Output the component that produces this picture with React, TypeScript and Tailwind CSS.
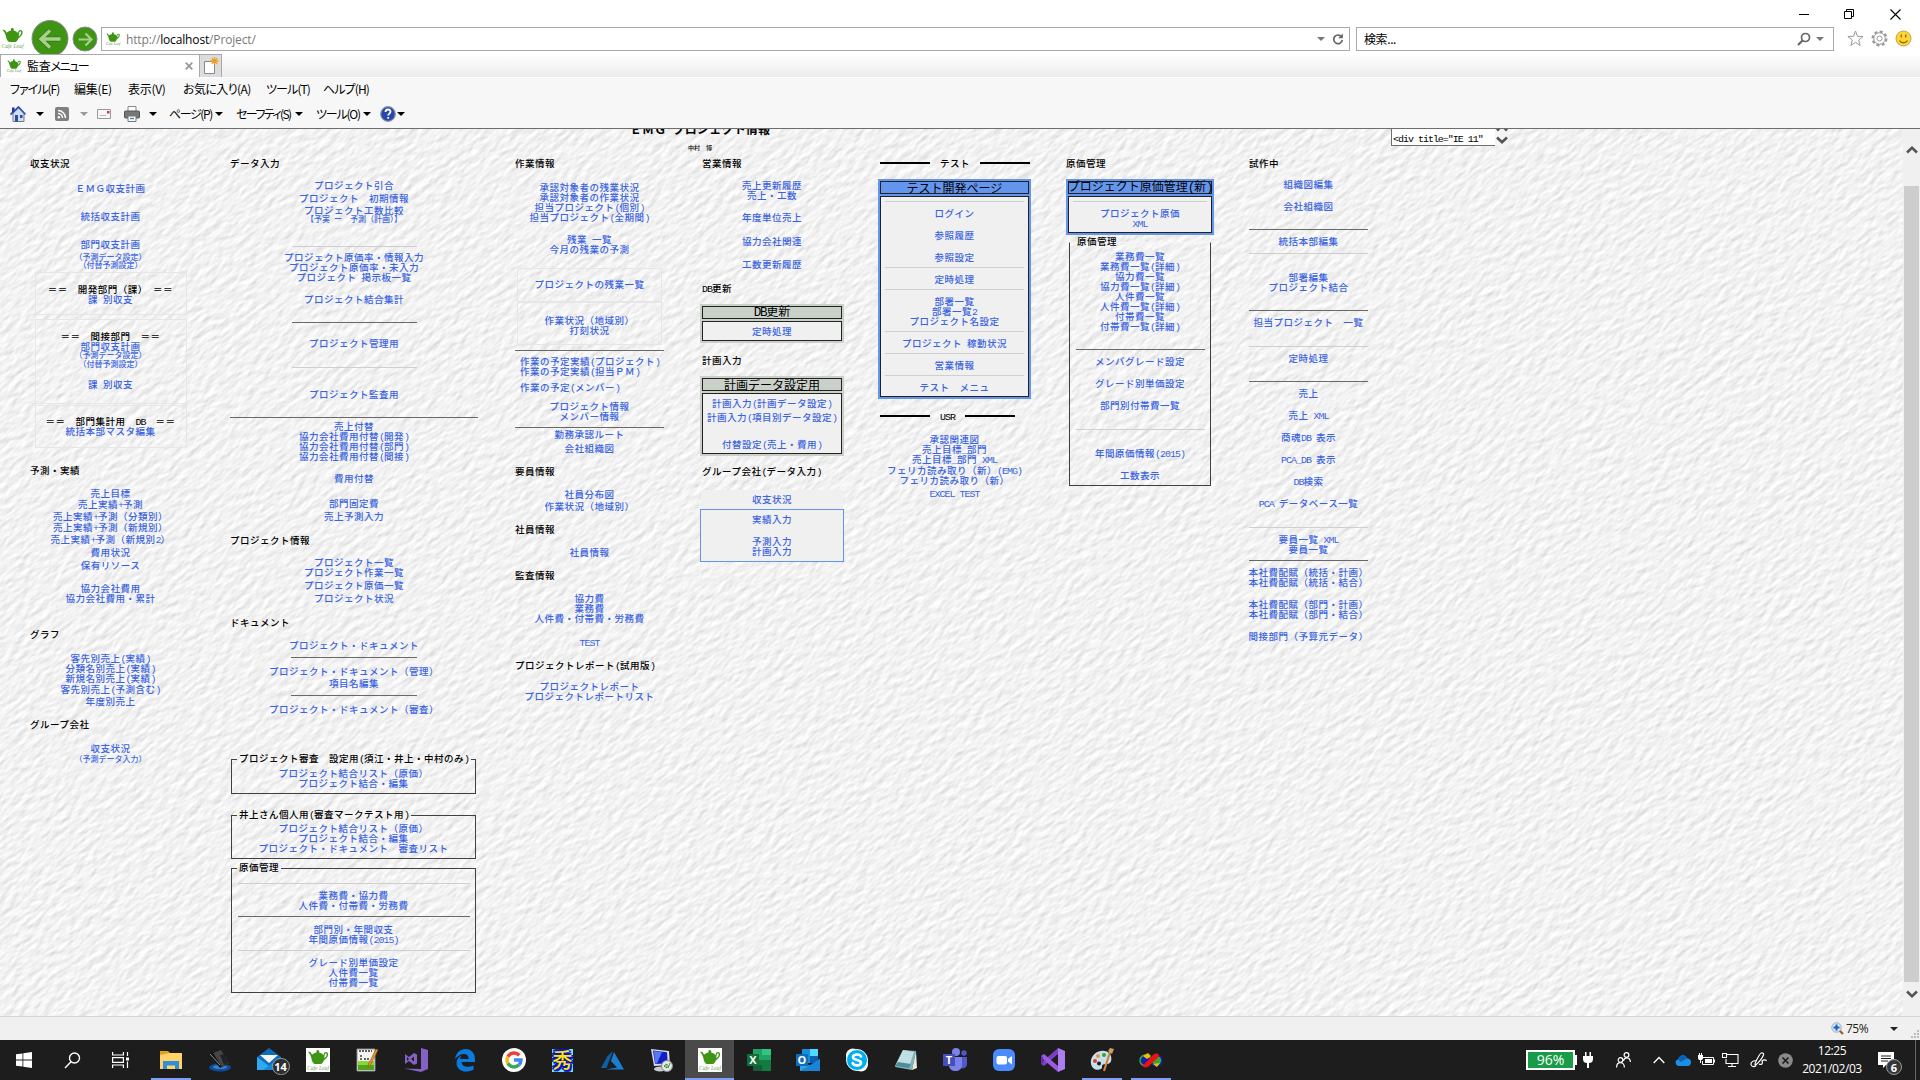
import React from "react";

type Kids = { children?: React.ReactNode };

/* ---------- text helpers ---------- */

function Mixed({ text }: { text: string }) {
  const parts = text.split(/([\x20-\x7e]+)/).filter(Boolean);
  return (
    <>
      {parts.map((p, i) =>
        /^[\x20-\x7e]/.test(p) ? (
          <span key={i} className="font-['Liberation_Mono',monospace] text-[1.05em] leading-none tracking-[-0.1em]">
            {p}
          </span>
        ) : (
          <span key={i}>{p}</span>
        )
      )}
    </>
  );
}

function A({ h = "h-[10px]", t, left }: { h?: string; t: string; left?: boolean }) {
  return (
    <div className={`${h} flex shrink-0 ${left ? "pl-[5px]" : "justify-center"} whitespace-pre text-[9.5px] font-medium leading-[8px] tracking-[0.5px] text-[#3a63e0]`}>
      <a className="shrink-0"><Mixed text={t} /></a>
    </div>
  );
}

function S({ h = "h-[8px]", t }: { h?: string; t: string }) {
  return (
    <div className={`${h} flex shrink-0 justify-center whitespace-pre text-[8px] font-medium leading-[9px] text-[#4169e1]`}>
      <a className="shrink-0"><Mixed text={t} /></a>
    </div>
  );
}

function H({ h, t, center }: { h: string; t: string; center?: boolean }) {
  return (
    <div className={`${h} flex shrink-0 whitespace-pre text-[9.5px] font-medium leading-[8px] tracking-[0.5px] text-black ${center ? "justify-center" : ""}`}>
      <span className="shrink-0"><Mixed text={t} /></span>
    </div>
  );
}

function R({ h, w = "w-full", dark }: { h: string; w?: string; dark?: boolean }) {
  return (
    <div className={`${h} shrink-0 pt-[5px]`}>
      <div className={`mx-auto h-px ${w} ${dark ? "bg-[#696969]" : "bg-[#cfcfcf]"}`} />
    </div>
  );
}

function Faint({ c, children }: Kids & { c: string }) {
  return <div className={`mx-auto w-[152px] shrink-0 border border-[#e6e6e6] ${c}`}>{children}</div>;
}

function Field({ c, legend, children }: Kids & { c: string; legend: string }) {
  return (
    <fieldset className={`box-border shrink-0 border border-[#404040] ${c}`}>
      <legend className="ml-[5px] h-[10px] whitespace-pre px-[2px] text-[9.5px] font-medium leading-[8px] tracking-[0.5px] text-black">
        <Mixed text={legend} />
      </legend>
      {children}
    </fieldset>
  );
}

function Panel({ c, tone, title, children }: Kids & { c: string; tone: string; title: string }) {
  return (
    <div className={`flex shrink-0 flex-col gap-[2px] p-[2px] ${tone} ${c}`}>
      <div className="flex h-[13px] shrink-0 items-center justify-center whitespace-pre border border-[#222] text-[12px] leading-[12px] text-black">
        <span className="shrink-0"><Mixed text={title} /></span>
      </div>
      <div className="flex-1 border border-[#222] bg-[#f0f0f0]">{children}</div>
    </div>
  );
}

/* ---------- icons ---------- */

function Teapot({ c, plate }: { c: string; plate?: boolean }) {
  return (
    <svg viewBox="0 0 24 24" className={c}>
      {plate && <rect width="24" height="24" fill="#fff" />}
      <path d="M2 4c2.200-.6 3.200.6 4 2.800C7.200 5.800 8.600 5 10.600 4.600 10 3.200 10.600 2 11.800 2s1.900 1.200 1.300 2.600c2 .4 3.500 1.300 4.500 2.700 0-2.500 1.500-3.600 3.200-3.100 2.400.8 1.800 5.300-3 8.300-.6 1.800-1.600 2.900-2.700 3.500H8.600C6.500 14.800 5.800 12.600 5.300 10 4.800 7.500 3.800 5.600 2 4z" fill="#3f9413" />
      <path d="M18.300 10.300c2.200-1.700 3-4.500 1.900-4.900-1-.3-1.900 1.200-1.900 4.900z" fill="#fff" />
      <text x="12" y="21.500" textAnchor="middle" fontFamily="Liberation Serif" fontStyle="italic" fontSize="5.600" fill="#6aa35a">Cafe Leaf</text>
    </svg>
  );
}

function Caret({ c = "text-black" }: { c?: string }) {
  return (
    <svg viewBox="0 0 8 4" className={`h-[4px] w-[8px] shrink-0 ${c}`}>
      <path d="M0 0h8L4 4z" fill="currentColor" />
    </svg>
  );
}

function Chevron({ up }: { up?: boolean }) {
  return (
    <svg viewBox="0 0 12 8" className="h-[8px] w-[12px]">
      <path d={up ? "M1 6.500L6 1.800l5 4.700" : "M1 1.500l5 4.700 5-4.700"} fill="none" stroke="#555" strokeWidth="2.600" />
    </svg>
  );
}

/* ---------- browser frame ---------- */

function AddressBar() {
  return (
    <div className="flex h-[54px] shrink-0 overflow-hidden bg-white">
      <div className="w-[26px] pt-[26px]">
        <Teapot c="h-[24px] w-[25px]" />
      </div>
      <div className="ml-[5px] h-[54px] w-[38px] overflow-hidden pt-[20px]">
        <svg viewBox="0 0 38 38" className="h-[38px] w-[38px]">
          <circle cx="19" cy="18.500" r="18" fill="#3f9413" stroke="#8a8a8a" />
          <path d="M29.500 19H11M19 10.500L10 19l9 8.500" fill="none" stroke="#2f7a0c" strokeWidth="5" />
          <path d="M29.500 19H11M19 10.500L10 19l9 8.500" fill="none" stroke="#a6d08c" strokeWidth="3.400" />
        </svg>
      </div>
      <div className="ml-[3px] w-[26px] pt-[26px]">
        <svg viewBox="0 0 26 26" className="h-[26px] w-[26px]">
          <circle cx="13" cy="13" r="12" fill="#3f9413" stroke="#8a8a8a" />
          <path d="M6.500 13.500H19M13.500 7.500l6 6-6 6" fill="none" stroke="#a6d08c" strokeWidth="2.200" />
        </svg>
      </div>
      <div className="ml-[3px] mt-[27px] flex h-[24px] w-[1249px] items-center border border-[#a9a9a9] bg-white pl-[3px] pr-[5px]">
        <Teapot c="h-[16px] w-[16px]" />
        <div className="ml-[5px] flex-1 whitespace-pre pt-[2px] font-['Open_Sans',sans-serif] text-[12px] tracking-[-0.15px] text-[#7a7a7a]">
          http://<span className="text-black">localhost</span>/Project/
        </div>
        <Caret c="text-[#777]" />
        <svg viewBox="0 0 12 12" className="ml-[7px] h-[12px] w-[12px]">
          <path d="M9.800 4.200A4.300 4.300 0 1 0 10.300 7" fill="none" stroke="#666" strokeWidth="1.700" />
          <path d="M10.800.5v4.700H6.200z" fill="#666" />
        </svg>
      </div>
      <div className="ml-[6px] mt-[27px] flex h-[24px] w-[478px] items-center border border-[#a9a9a9] bg-white pl-[7px] pr-[9px]">
        <div className="flex-1 text-[12px] tracking-[-0.4px]">検索...</div>
        <svg viewBox="0 0 14 14" className="h-[14px] w-[14px]">
          <circle cx="8.500" cy="5.500" r="4" fill="none" stroke="#666" strokeWidth="1.700" />
          <path d="M5.500 8.500L1 13" stroke="#666" strokeWidth="2.200" />
        </svg>
        <Caret c="text-[#777] ml-[5px]" />
      </div>
      <div className="flex flex-1 flex-col">
        <div className="-ml-[38px] flex h-[28px] items-center">
          <svg viewBox="0 0 10 10" className="ml-[3px] h-[10px] w-[10px]"><path d="M0 5.500h10" stroke="#000" /></svg>
          <svg viewBox="0 0 10 10" className="ml-[35px] h-[10px] w-[10px]">
            <path d="M.5 2.500h7v7h-7zM2.500 2.500v-2h7v7h-2" fill="none" stroke="#000" />
          </svg>
          <svg viewBox="0 0 11 11" className="ml-[36px] h-[11px] w-[11px]"><path d="M.5.5l10 10M10.500.5l-10 10" stroke="#000" strokeWidth="1.100" /></svg>
        </div>
        <div className="flex h-[20px] items-center gap-[7px] pl-[13px]">
          <svg viewBox="0 0 17 17" className="h-[17px] w-[17px]">
            <path d="M8.500 1l2 5.300 5.600.2-4.400 3.500 1.500 5.500-4.700-3.200-4.700 3.200L5.300 10 .9 6.500l5.600-.2z" fill="#fff" stroke="#999" />
          </svg>
          <svg viewBox="0 0 17 17" className="h-[17px] w-[17px]">
            <circle cx="8.500" cy="8.500" r="6.800" fill="none" stroke="#999" strokeWidth="2.400" strokeDasharray="3 2.340" />
            <circle cx="8.500" cy="8.500" r="5.700" fill="#fff" stroke="#999" />
            <circle cx="8.500" cy="8.500" r="2.500" fill="#fff" stroke="#999" />
          </svg>
          <svg viewBox="0 0 17 17" className="h-[17px] w-[17px]">
            <circle cx="8.500" cy="8.500" r="7.500" fill="#ffd633" stroke="#b9a25a" />
            <path d="M6.300 4.500v3M10.700 4.500v3M4.500 10.500c1.500 3 6.500 3 8 0" fill="none" stroke="#8a6a00" strokeWidth="1.300" />
          </svg>
        </div>
      </div>
    </div>
  );
}

function TabRow() {
  return (
    <div className="flex h-[23px] shrink-0 bg-linear-to-b from-white to-[#ececec]">
      <div className="flex w-[200px] items-center border-x border-t border-[#a9a9a9] bg-white pl-[5px] pr-[6px]">
        <Teapot c="h-[16px] w-[16px]" />
        <div className="ml-[5px] flex-1 text-[12px] tracking-[-1.4px] text-black [font-feature-settings:'palt']"><span className="tracking-[-0.3px]">監査</span>メニュー</div>
        <svg viewBox="0 0 8 8" className="h-[8px] w-[8px]"><path d="M.7.7l6.600 6.600M7.300.7L.7 7.300" stroke="#999" strokeWidth="1.800" /></svg>
      </div>
      <div className="flex w-[22px] items-center justify-center border-r border-t border-[#a9a9a9] bg-[#dcdcdc]">
        <svg viewBox="0 0 16 18" className="h-[18px] w-[16px]">
          <path d="M1.500 4.500h10v12h-10z" fill="#fff" stroke="#888" />
          <path d="M11.500 0v8M7.500 4h8M8.700 1.200l5.600 5.600M14.300 1.200L8.700 6.800" stroke="#f0a020" strokeWidth="1.300" />
        </svg>
      </div>
    </div>
  );
}

const menu: [string, string][] = [
  ["w-[64px] tracking-[-1px]", "ファイル(F)"],
  ["w-[54px] tracking-[-0.3px]", "編集(E)"],
  ["w-[55px] tracking-[-0.3px]", "表示(V)"],
  ["w-[83px] tracking-[-0.6px]", "お気に入り(A)"],
  ["w-[57px] tracking-[-0.9px]", "ツール(T)"],
  ["w-[60px] tracking-[-0.9px]", "ヘルプ(H)"],
];

function MenuBar() {
  return (
    <div className="flex h-[25px] shrink-0 items-center border-t border-white bg-[#f7f7f7] pb-[3px] pl-[10px] text-[12px] text-black [font-feature-settings:'palt']">
      {menu.map(([w, t]) => (
        <div key={t} className={`${w} shrink-0 whitespace-pre`}>{t}</div>
      ))}
    </div>
  );
}

function CommandBar() {
  return (
    <div className="flex h-[27px] shrink-0 items-center border-b border-[#6d6d6d] bg-[#f7f7f7] pb-[3px] pl-[10px] text-[12px] text-black [font-feature-settings:'palt']">
      <svg viewBox="0 0 16 16" className="h-[16px] w-[16px]">
        <path d="M3 7v8.500h11V7L8.500 2z" fill="#d5dcea" stroke="#6d7b98" />
        <path d="M.5 8.500L8.500 1l7 7.500" fill="none" stroke="#3552b5" strokeWidth="1.800" />
        <path d="M2 1.500h2.500V5L2 7z" fill="#24348f" />
        <path d="M5 9h3v6.500H5z" fill="#2450a0" /><path d="M10 9h2.500v3H10z" fill="#2450a0" />
      </svg>
      <div className="flex w-[29px] justify-center pr-[1px]"><Caret /></div>
      <svg viewBox="0 0 14 14" className="h-[14px] w-[14px]">
        <rect width="14" height="14" rx="2" fill="#808080" />
        <path d="M3 6.500A4.500 4.500 0 0 1 7.500 11M3 3.500a7.500 7.500 0 0 1 7.500 7.500" fill="none" stroke="#fff" strokeWidth="1.500" />
        <circle cx="3.900" cy="10.200" r="1.200" fill="#fff" />
      </svg>
      <div className="flex w-[28px] justify-center pl-[2px]"><Caret c="text-[#999]" /></div>
      <svg viewBox="0 0 14 10" className="h-[10px] w-[14px]">
        <path d="M.5.5h13v9H.5z" fill="#f7f7fa" stroke="#999" /><path d="M10 2h2.500v2.500H10z" fill="#d33" /><path d="M3 6.500h6" stroke="#bbb" />
      </svg>
      <svg viewBox="0 0 16 16" className="ml-[13px] h-[16px] w-[16px]">
        <path d="M4 .5h8V6H4z" fill="#fff" stroke="#888" />
        <rect x=".5" y="5" width="15" height="7" rx="1" fill="#777" stroke="#555" />
        <path d="M4 10h8v5.500H4z" fill="#fff" stroke="#777" /><path d="M6 12.500h4" stroke="#2a9ad0" strokeWidth="1.500" />
      </svg>
      <div className="flex w-[29px] justify-center pr-[3px]"><Caret /></div>
      <div className="w-[46px] whitespace-pre tracking-[-1.4px]">ページ(P)</div><Caret />
      <div className="ml-[13px] w-[59px] whitespace-pre tracking-[-1.6px]">セーフティ(S)</div><Caret />
      <div className="ml-[13px] w-[47px] whitespace-pre tracking-[-1.2px]">ツール(O)</div><Caret />
      <svg viewBox="0 0 16 16" className="ml-[9px] h-[16px] w-[16px]">
        <circle cx="8" cy="8" r="7.300" fill="#2748a8" stroke="#8b93a8" strokeWidth="1.200" />
        <path d="M5.500 6c0-3.300 5-3.300 5-.2 0 1.800-2.300 1.800-2.300 3.700M8.200 11v1.800" fill="none" stroke="#fff" strokeWidth="1.800" />
      </svg>
      <div className="ml-px"><Caret /></div>
    </div>
  );
}

/* ---------- page background ---------- */

function Paper() {
  return (
    <svg className="pointer-events-none absolute inset-0 h-full w-full">
      <filter id="paper" x="0" y="0" width="100%" height="100%" colorInterpolationFilters="sRGB">
        <feTurbulence type="fractalNoise" baseFrequency="0.08 0.17" numOctaves="3" seed="4" />
        <feDiffuseLighting surfaceScale="0.550" diffuseConstant="1.040" lightingColor="#ffffff">
          <feDistantLight azimuth="270" elevation="66" />
        </feDiffuseLighting>
      </filter>
      <g transform="rotate(-38 950 440)">
        <rect x="-200" y="-500" width="2300" height="1900" fill="#f0f0f0" filter="url(#paper)" />
      </g>
    </svg>
  );
}

/* ---------- columns ---------- */

function ColIncome() {
  return (
    <div className="ml-[30px] flex w-[161px] flex-col">
      <H h="h-[25px]" t="収支状況" />
      <A h="h-[28px]" t="ＥＭＧ収支計画" />
      <A h="h-[28px]" t="統括収支計画" />
      <A h="h-[12px]" t="部門収支計画" />
      <S t="（予測データ設定）" />
      <S h="h-[12px]" t="（付替予測設定）" />
      <Faint c="h-[43px] pt-[12px]">
        <H h="h-[10px]" t="＝＝　開発部門（課）　＝＝" center />
        <A t="課 別収支" />
      </Faint>
      <Faint c="mt-[4px] h-[85px] pt-[12px]">
        <H h="h-[10px]" t="＝＝　間接部門　＝＝" center />
        <A h="h-[8px]" t="部門収支計画" />
        <S h="h-[9px]" t="（予測データ設定）" />
        <S h="h-[21px]" t="（付替予測設定）" />
        <A t="課 別収支" />
      </Faint>
      <Faint c="mt-px h-[43px] pt-[11px]">
        <H h="h-[10px]" t="＝＝　部門集計用　DB　＝＝" center />
        <A t="統括本部マスタ編集" />
      </Faint>
      <div className="h-[18px]" />
      <H h="h-[23px]" t="予測・実績" />
      <A h="h-[11px]" t="売上目標" />
      <A h="h-[12px]" t="売上実績+予測" />
      <A h="h-[11px]" t="売上実績+予測（分類別）" />
      <A h="h-[12px]" t="売上実績+予測（新規別）" />
      <A h="h-[13px]" t="売上実績+予測（新規別2）" />
      <A h="h-[13px]" t="費用状況" />
      <A h="h-[23px]" t="保有リソース" />
      <A t="協力会社費用" />
      <A h="h-[36px]" t="協力会社費用・累計" />
      <H h="h-[24px]" t="グラフ" />
      <A t="客先別売上(実績)" />
      <A t="分類名別売上(実績)" />
      <A h="h-[11px]" t="新規名別売上(実績)" />
      <A h="h-[12px]" t="客先別売上(予測含む)" />
      <A h="h-[23px]" t="年度別売上" />
      <H h="h-[24px]" t="グループ会社" />
      <A t="収支状況" />
      <S t="（予測データ入力）" />
    </div>
  );
}

function ColEntry() {
  return (
    <div className="ml-[39px] flex w-[248px] flex-col">
      <H h="h-[22px]" t="データ入力" />
      <A h="h-[13px]" t="プロジェクト引合" />
      <A h="h-[12px]" t="プロジェクト　初期情報" />
      <A h="h-[8px]" t="プロジェクト工数比較" />
      <S h="h-[27px]" t="【予実 ー　予測（計画）】" />
      <R h="h-[12px]" w="w-[125px]" />
      <A t="プロジェクト原価率・情報入力" />
      <A t="プロジェクト原価率・未入力" />
      <A h="h-[22px]" t="プロジェクト 掲示板一覧" />
      <A h="h-[22px]" t="プロジェクト結合集計" />
      <R h="h-[22px]" w="w-[125px]" dark />
      <A h="h-[23px]" t="プロジェクト管理用" />
      <R h="h-[28px]" w="w-[125px]" />
      <A h="h-[22px]" t="プロジェクト監査用" />
      <R h="h-[10px]" dark />
      <A t="売上付替" />
      <A t="協力会社費用付替(開発)" />
      <A t="協力会社費用付替(部門)" />
      <A h="h-[22px]" t="協力会社費用付替(間接)" />
      <A h="h-[25px]" t="費用付替" />
      <A h="h-[13px]" t="部門固定費" />
      <A h="h-[24px]" t="売上予測入力" />
      <H h="h-[22px]" t="プロジェクト情報" />
      <A t="プロジェクト一覧" />
      <A h="h-[13px]" t="プロジェクト作業一覧" />
      <A h="h-[13px]" t="プロジェクト原価一覧" />
      <A h="h-[24px]" t="プロジェクト状況" />
      <H h="h-[23px]" t="ドキュメント" />
      <A h="h-[11px]" t="プロジェクト・ドキュメント" />
      <R h="h-[15px]" w="w-[126px]" dark />
      <A h="h-[12px]" t="プロジェクト・ドキュメント（管理）" />
      <A h="h-[11px]" t="項目名編集" />
      <R h="h-[15px]" w="w-[126px]" dark />
      <A h="h-[49px]" t="プロジェクト・ドキュメント（審査）" />
      <Field c="ml-px h-[40px] w-[245px]" legend="プロジェクト審査　設定用(須江・井上・中村のみ)">
        <div className="h-[5px]" />
        <A t="プロジェクト結合リスト（原価）" />
        <A t="プロジェクト結合・編集" />
      </Field>
      <Field c="ml-px mt-[16px] h-[49px] w-[245px]" legend="井上さん個人用(審査マークテスト用)">
        <div className="h-[4px]" />
        <A t="プロジェクト結合リスト（原価）" />
        <A t="プロジェクト結合・編集" />
        <A t="プロジェクト・ドキュメント　審査リスト" />
      </Field>
      <Field c="ml-px mt-[4px] h-[130px] w-[245px]" legend="原価管理">
        <div className="h-[5px]" />
        <R h="h-[13px]" w="w-[232px]" />
        <A t="業務費・協力費" />
        <A t="人件費・付帯費・労務費" />
        <R h="h-[14px]" w="w-[232px]" dark />
        <A t="部門別・年間収支" />
        <A t="年間原価情報(2015)" />
        <R h="h-[13px]" w="w-[232px]" />
        <A t="グレード別単価設定" />
        <A t="人件費一覧" />
        <A t="付帯費一覧" />
      </Field>
    </div>
  );
}

function ColWork() {
  return (
    <div className="ml-[37px] flex w-[149px] flex-col">
      <H h="h-[24px]" t="作業情報" />
      <A t="承認対象者の残業状況" />
      <A t="承認対象者の作業状況" />
      <A t="担当プロジェクト(個別)" />
      <A h="h-[22px]" t="担当プロジェクト(全期間)" />
      <A t="残業 一覧" />
      <A h="h-[23px]" t="今月の残業の予測" />
      <div className="mx-[2px] h-[34px] border border-[#e6e6e6] pt-[11px]">
        <A t="プロジェクトの残業一覧" />
      </div>
      <div className="mx-[2px] h-[43px] border border-[#e6e6e6] pt-[13px]">
        <A t="作業状況（地域別）" />
        <A t="打刻状況" />
      </div>
      <R h="h-[12px]" dark />
      <A t="作業の予定実績(プロジェクト)" left />
      <A h="h-[16px]" t="作業の予定実績(担当ＰＭ)" left />
      <A h="h-[19px]" t="作業の予定(メンバー)" left />
      <A t="プロジェクト情報" />
      <A t="メンバー情報" />
      <R h="h-[8px]" dark />
      <A h="h-[14px]" t="勤務承認ルート" />
      <A h="h-[23px]" t="会社組織図" />
      <H h="h-[23px]" t="要員情報" />
      <A h="h-[12px]" t="社員分布図" />
      <A h="h-[23px]" t="作業状況（地域別）" />
      <H h="h-[23px]" t="社員情報" />
      <A h="h-[23px]" t="社員情報" />
      <H h="h-[23px]" t="監査情報" />
      <A t="協力費" />
      <A t="業務費" />
      <A h="h-[24px]" t="人件費・付帯費・労務費" />
      <A h="h-[23px]" t="TEST" />
      <H h="h-[21px]" t="プロジェクトレポート(試用版)" />
      <A t="プロジェクトレポート" />
      <A t="プロジェクトレポートリスト" />
    </div>
  );
}

function ColSales() {
  return (
    <div className="ml-[36px] flex w-[144px] flex-col">
      <div className="flex flex-col">
        <div className="pl-[2px]"><H h="h-[22px]" t="営業情報" /></div>
        <A t="売上更新履歴" />
        <A h="h-[22px]" t="売上・工数" />
        <A h="h-[24px]" t="年度単位売上" />
        <A h="h-[23px]" t="協力会社関連" />
        <A h="h-[24px]" t="工数更新履歴" />
      </div>
      <div className="pl-[2px]"><H h="h-[20px]" t="DB更新" /></div>
      <Panel c="h-[39px]" tone="bg-[#c8d0c8]" title="DB更新">
        <div className="h-[5px]" />
        <A t="定時処理" />
      </Panel>
      <div className="h-[13px]" />
      <div className="pl-[2px]"><H h="h-[20px]" t="計画入力" /></div>
      <Panel c="h-[80px]" tone="bg-[#c8d0c8]" title="計画データ設定用">
        <div className="h-[5px]" />
        <A h="h-[14px]" t="計画入力(計画データ設定)" />
        <A h="h-[27px]" t="計画入力(項目別データ設定)" />
        <A t="付替設定(売上・費用)" />
      </Panel>
      <div className="h-[11px]" />
      <div className="pl-[2px]"><H h="h-[23px]" t="グループ会社(データ入力)" /></div>
      <div className="mx-px h-[19px] bg-[#f0f0f0] pt-[5px]"><A t="収支状況" /></div>
      <div className="h-[53px] border border-[#6495ed] bg-[#f0f0f0] pt-[5px]">
        <A h="h-[22px]" t="実績入力" />
        <A t="予測入力" />
        <A t="計画入力" />
      </div>
    </div>
  );
}

function Bars({ h, t, w }: { h: string; t: string; w: string }) {
  return (
    <div className={`${h} flex shrink-0 pl-[2px] text-[9.5px] font-medium leading-[8px] tracking-[0.5px] text-black`}>
      <div className="mt-[3px] h-[2px] w-[50px] bg-black" />
      <div className={`${w} pl-[10px]`}><Mixed text={t} /></div>
      <div className="mt-[3px] h-[2px] w-[50px] bg-black" />
    </div>
  );
}

function ColTest() {
  return (
    <div className="ml-[34px] flex w-[153px] flex-col">
      <Bars h="h-[20px]" t="テスト" w="w-[50px]" />
      <Panel c="h-[220px]" tone="bg-[#6495ed]" title="テスト開発ページ">
        <div className="-mt-px px-[4px]">
          <R h="h-[13px]" />
          <A h="h-[22px]" t="ログイン" />
          <A h="h-[22px]" t="参照履歴" />
          <A h="h-[9px]" t="参照設定" />
          <R h="h-[13px]" />
          <A h="h-[9px]" t="定時処理" />
          <R h="h-[13px]" />
          <A t="部署一覧" />
          <A t="部署一覧2" />
          <A h="h-[9px]" t="プロジェクト名設定" />
          <R h="h-[13px]" />
          <A h="h-[9px]" t="プロジェクト 稼動状況" />
          <R h="h-[13px]" />
          <A h="h-[9px]" t="営業情報" />
          <R h="h-[13px]" />
          <A t="テスト　メニュ" />
        </div>
      </Panel>
      <div className="h-[13px]" />
      <Bars h="h-[23px]" t="USR" w="w-[35px]" />
      <A t="承認関連図" />
      <A t="売上目標_部門" />
      <A h="h-[11px]" t="売上目標_部門 XML" />
      <A t="フェリカ読み取り（新）(EMG)" />
      <A h="h-[13px]" t="フェリカ読み取り（新）" />
      <A t="EXCEL TEST" />
    </div>
  );
}

function ColCost() {
  return (
    <div className="ml-[35px] flex w-[148px] flex-col">
      <H h="h-[20px]" t="原価管理" />
      <Panel c="h-[56px]" tone="bg-[#6495ed]" title="プロジェクト原価管理(新)">
        <div className="-mt-px px-[4px]">
          <R h="h-[13px]" />
          <A t="プロジェクト原価" />
          <A t="XML" />
        </div>
      </Panel>
      <Field c="ml-[3px] mt-[2px] h-[249px] w-[142px] border-t-[#f6f6f6]" legend="原価管理">
        <div className="h-[5px]" />
        <A t="業務費一覧" />
        <A t="業務費一覧(詳細)" />
        <A t="協力費一覧" />
        <A t="協力費一覧(詳細)" />
        <A t="人件費一覧" />
        <A t="人件費一覧(詳細)" />
        <A t="付帯費一覧" />
        <A h="h-[22px]" t="付帯費一覧(詳細)" />
        <R h="h-[13px]" w="w-[129px]" dark />
        <A h="h-[22px]" t="メンバグレード設定" />
        <A h="h-[22px]" t="グレード別単価設定" />
        <A h="h-[23px]" t="部門別付帯費一覧" />
        <R h="h-[25px]" w="w-[129px]" />
        <A h="h-[22px]" t="年間原価情報(2015)" />
        <A t="工数表示" />
      </Field>
    </div>
  );
}

function ColTrial() {
  return (
    <div className="ml-[35px] flex w-[119px] flex-col">
      <H h="h-[21px]" t="試作中" />
      <A h="h-[22px]" t="組織図編集" />
      <A h="h-[22px]" t="会社組織図" />
      <R h="h-[13px]" dark />
      <A h="h-[11px]" t="統括本部編集" />
      <R h="h-[25px]" />
      <A t="部署編集" />
      <A h="h-[22px]" t="プロジェクト結合" />
      <R h="h-[13px]" dark />
      <A h="h-[23px]" t="担当プロジェクト　一覧" />
      <R h="h-[13px]" />
      <A h="h-[22px]" t="定時処理" />
      <R h="h-[13px]" dark />
      <A h="h-[22px]" t="売上" />
      <A h="h-[22px]" t="売上 XML" />
      <A h="h-[22px]" t="商魂DB 表示" />
      <A h="h-[22px]" t="PCA_DB 表示" />
      <A h="h-[22px]" t="DB検索" />
      <A h="h-[23px]" t="PCA データベース一覧" />
      <R h="h-[13px]" />
      <A t="要員一覧 XML" />
      <A t="要員一覧" />
      <R h="h-[13px]" dark />
      <A t="本社費配賦（統括・計画）" />
      <A h="h-[22px]" t="本社費配賦（統括・結合）" />
      <A t="本社費配賦（部門・計画）" />
      <A h="h-[22px]" t="本社費配賦（部門・結合）" />
      <A t="間接部門（予算元データ）" />
    </div>
  );
}

function Content() {
  return (
    <div className="relative flex h-[887px] shrink-0 overflow-hidden bg-[#f0f0f0]">
      <Paper />
      <div className="relative flex w-[1903px] flex-col">
        <div className="flex h-[30px] shrink-0">
          <div className="ml-[629px] w-[142px] text-center text-black">
            <div className="-mt-[6px] whitespace-pre text-[12px] font-bold leading-[12px] tracking-[0.2px]"><Mixed text="ＥＭＧ プロジェクト情報" /></div>
            <div className="mt-[5px] text-[6px] font-medium leading-[10px]">中村　博</div>
          </div>
          <div className="ml-[620px] h-[17px] w-[104px] whitespace-pre border-b border-l border-[#6d6d6d] bg-white pl-[1px] pt-[4px] text-[9.5px] leading-[10px] text-black">
            <Mixed text={'<div title="IE 11"'} />
          </div>
          <div className="flex h-[17px] w-[13px] flex-col items-center justify-between overflow-hidden bg-[#f4f4f4]">
            <div className="-mt-[5px]"><Chevron up /></div>
            <div className="mb-[2px]"><Chevron /></div>
          </div>
        </div>
        <div className="flex flex-1 items-start">
          <ColIncome />
          <ColEntry />
          <ColWork />
          <ColSales />
          <ColTest />
          <ColCost />
          <ColTrial />
        </div>
      </div>
      <div className="relative flex w-[17px] flex-col items-center bg-[#f0f0f0]">
        <div className="flex h-[57px] items-start pt-[17px]"><Chevron up /></div>
        <div className="h-[796px] w-[15px] bg-[#cdcdcd]" />
        <div className="pt-[8px]"><Chevron /></div>
      </div>
    </div>
  );
}

function StatusBar() {
  return (
    <div className="flex h-[24px] shrink-0 items-center border-t border-[#d4d4d4] bg-[#f0f0f0] pl-[1831px]">
      <svg viewBox="0 0 13 13" className="h-[13px] w-[13px] shrink-0">
        <path d="M8.500 8.500l3.500 3.500" stroke="#a0622d" strokeWidth="2.400" />
        <circle cx="5.500" cy="5.500" r="4.700" fill="#dbeafa" stroke="#9ab" />
        <path d="M5.500 2.500v6M2.500 5.500h6" stroke="#1560c8" strokeWidth="2" />
      </svg>
      <div className="ml-[2px] w-[44px] font-['Open_Sans',sans-serif] text-[12px] tracking-[-0.5px] text-[#222]">75%</div>
      <Caret c="text-[#222]" />
      <svg viewBox="0 0 8 8" className="ml-[13px] mt-[10px] h-[8px] w-[8px] shrink-0">
        <path d="M6 0h2v2H6zM3 3h2v2H3zM6 3h2v2H6zM0 6h2v2H0zM3 6h2v2H3zM6 6h2v2H6z" fill="#bbb" />
      </svg>
    </div>
  );
}

/* ---------- taskbar ---------- */

function Ico({ children, vb = "0 0 24 24", c = "h-[24px] w-[24px]" }: Kids & { vb?: string; c?: string }) {
  return <svg viewBox={vb} className={c}>{children}</svg>;
}

function Slot({ children, run, active }: Kids & { run?: boolean; active?: boolean }) {
  return (
    <div className={`flex h-[40px] w-[49px] shrink-0 flex-col items-center ${active ? "bg-[#4a4a4a]" : ""}`}>
      <div className="flex h-[38px] items-center pt-[2px]">{children}</div>
      {(run || active) && <div className={`h-[2px] bg-[#7f9ff5] ${active ? "w-full" : "w-[40px]"}`} />}
    </div>
  );
}

function Taskbar() {
  const label = "Open Sans, sans-serif";
  return (
    <div className="flex h-[40px] shrink-0 bg-[#1d1d1d] text-white">
      <div className="-ml-px flex shrink-0">
      <Slot>
        <Ico vb="0 0 16 16" c="h-[16px] w-[16px]"><path d="M0 2.300L6.500 1.400v6.200H0zM7.300 1.300L16 0v7.600H7.300zM0 8.400h6.500v6.200L0 13.700zM7.300 8.400H16V16l-8.700-1.300z" fill="#fff" /></Ico>
      </Slot>
      <Slot>
        <Ico vb="0 0 17 17" c="h-[17px] w-[17px]"><circle cx="10.500" cy="6" r="5" fill="none" stroke="#fff" strokeWidth="1.400" /><path d="M7 9.700L1 16" stroke="#fff" strokeWidth="1.400" /></Ico>
      </Slot>
      <Slot>
        <Ico vb="0 0 17 16" c="h-[16px] w-[17px] -ml-[3px]"><path d="M.6 0v3h10.800V0M.6 16v-3h10.800v3M.6 5.600h10.800v4.800H.6zM15.500 0v4M15.500 9.500V16" fill="none" stroke="#fff" strokeWidth="1.200" /><path d="M14 5.500h3v3h-3z" fill="#fff" /></Ico>
      </Slot>
      <Slot run>
        <Ico><path d="M1 3h8l2 2h12v16H1z" fill="#e0a21b" /><path d="M1 7l10-2h12v16H1z" fill="#ffd367" /><path d="M4 21v-8h16v8h-4v-3.500H8V21z" fill="#2f8fdc" /></Ico>
      </Slot>
      <Slot>
        <Ico><ellipse cx="12" cy="19.500" rx="11" ry="4" fill="#0d4d9a" /><ellipse cx="12" cy="19" rx="7" ry="2" fill="#3a82cc" /><path d="M1 6l5-2 14 12-8 4z" fill="#111" /><path d="M5 5l8-3 8 13-7 4z" fill="#454545" /><path d="M12 7l5-1 5 8-6 3z" fill="#222" /><path d="M2 6l10 11" stroke="#999" /></Ico>
      </Slot>
      <Slot>
        <div className="relative">
          <Ico><path d="M0 9L12 0l12 9v13H0z" fill="#0f6cbd" /><path d="M3 7h18l-9 8z" fill="#f4f4f4" /><path d="M0 9l12 9L24 9v13H0z" fill="#2eaaf0" /><path d="M24 9L6 22h18z" fill="#1787d6" /></Ico>
          <div className="absolute -right-[9px] top-[10px] flex h-[17px] w-[18px] items-center justify-center rounded-full border border-[#999] bg-[#2b2f33] font-['Open_Sans',sans-serif] text-[11px] font-bold leading-none">14</div>
        </div>
      </Slot>
      <Slot><Teapot plate c="h-[24px] w-[24px]" /></Slot>
      <Slot>
        <Ico><path d="M2 1h18v22H2z" fill="#f2f2f2" stroke="#888" /><path d="M3 13h16v9H3z" fill="#8bd63a" /><path d="M3 17h16v5H3z" fill="#4fa41b" /><path d="M6 7v6M9 11h2M12 11h2M4 3h13" stroke="#333" strokeWidth="1.400" strokeDasharray="2 1" /><path d="M21 1l2 1-8 16-2 1 .5-3z" fill="#e89a2c" stroke="#8a4a10" strokeWidth=".6" /></Ico>
      </Slot>
      <Slot>
        <Ico><path d="M17 0l7 2v19l-7 3-17-3.500 17 .5z" fill="#8661c5" /><path d="M1 6l4 3 5-4 3 1.500v9L10 17l-5-4-4 3zM3 9v4l2-2zM10 8.500L7 11l3 2.500z" fill="#8661c5" fillRule="evenodd" /></Ico>
      </Slot>
      <Slot>
        <Ico><path d="M2 11C3 4.500 7.500 1 12.500 1 18.500 1 22 5.500 22 11v3H8.500c.5 5 7 6 12 3.500v4.300C12 26 3.500 22.500 3.500 15c0-3.500 2-6 5-7.500-1 1.300-1.300 2.300-1.400 3.500h8.600c0-3-1.500-5-4.700-5C7.500 6 4.500 8 2 11z" fill="#0a7bdc" /></Ico>
      </Slot>
      <Slot>
        <Ico><circle cx="12" cy="12" r="12" fill="#fff" /><g fill="none" strokeWidth="3.400"><path d="M17.300 7.300A7 7 0 0 0 5.900 8.700" stroke="#ea4335" /><path d="M5.900 8.700a7 7 0 0 0 0 6.700" stroke="#fbbc05" /><path d="M5.900 15.400A7 7 0 0 0 16.800 17" stroke="#34a853" /><path d="M16.800 17c1.500-1.200 2.200-3 2.200-5h-7" stroke="#4285f4" /></g></Ico>
      </Slot>
      <Slot>
        <div className="flex h-[23px] w-[21px] items-center justify-center overflow-hidden bg-[#7fe0e8] font-['Noto_Sans_CJK_JP',sans-serif] text-[20px] font-medium leading-none text-[#ffe600] [text-shadow:2px_0_0_#0a14c8,-2px_0_0_#0a14c8,0_2px_0_#0a14c8,0_-2px_0_#0a14c8,2px_2px_0_#0a14c8,-2px_-2px_0_#0a14c8]">秀</div>
      </Slot>
      <Slot>
        <Ico><path d="M13 3L7.500 8 1 20h5.500z" fill="#0f5fa8" /><path d="M14 4l10 17.500H6l11-2-6-6.500z" fill="#1a7fd0" /></Ico>
      </Slot>
      <Slot>
        <Ico><path d="M2 1l18 2 1 14-16 1z" fill="#d8dce6" /><path d="M4 2.500l14 1.700.7 11.300L6 16z" fill="#1020c8" /><path d="M5 3l8 1-5 11.500H6z" fill="#5a78f0" /><ellipse cx="11" cy="21" rx="6" ry="2.500" fill="#c8ccd0" /><circle cx="18" cy="18" r="5.500" fill="#e4e8e4" stroke="#888" /><path d="M15 18l3-2v4zM21 15l-2 5" stroke="#3a8a3a" fill="none" /></Ico>
      </Slot>
      <Slot active><Teapot plate c="h-[24px] w-[24px]" /></Slot>
      <Slot>
        <Ico><path d="M6 1h18v22H6z" fill="#21a366" /><path d="M6 12h18v11H6z" fill="#107c41" /><path d="M15 1h9v6h-9z" fill="#33c481" /><path d="M6 17h9v6H6z" fill="#185c37" /><path d="M0 6h12v12H0z" fill="#0f6e3a" /><text x="6" y="16" textAnchor="middle" fontFamily={label} fontWeight="700" fontSize="11" fill="#fff">X</text></Ico>
      </Slot>
      <Slot>
        <Ico><path d="M6 1h16v14H6z" fill="#1490df" /><path d="M14 1h8v7h-8z" fill="#50d9ff" /><path d="M14 8h8v7h-8z" fill="#0a5fb4" /><path d="M4 11l10 7 10-7v12H4z" fill="#28a8ea" /><path d="M4 23l20-12v12z" fill="#1a84d6" /><path d="M0 6h12v12H0z" fill="#0f6cbd" /><text x="6" y="16" textAnchor="middle" fontFamily={label} fontWeight="700" fontSize="11" fill="#fff">O</text></Ico>
      </Slot>
      <Slot>
        <Ico><circle cx="8" cy="7.500" r="7" fill="#fff" /><circle cx="16" cy="16.500" r="7" fill="#fff" /><circle cx="12" cy="12" r="10.500" fill="#00aff0" stroke="#fff" /><path d="M16 8.500C14.500 5.500 8 6 8 9.300c0 3.500 8 2 8 5.400 0 3.300-7 3.800-8.300.3" fill="none" stroke="#fff" strokeWidth="2.600" strokeLinecap="round" /></Ico>
      </Slot>
      <Slot>
        <Ico><path d="M9 2l13 1-4 19L1 19z" fill="#7fb3b8" /><path d="M9 2l11 2-5 15L1 18z" fill="#bfe0e2" /><path d="M4 14l13 2-2 4-14-2z" fill="#4d8f98" /><path d="M22 3l1 17-5 2z" fill="#e8e8e0" /></Ico>
      </Slot>
      <Slot>
        <Ico><circle cx="13" cy="4" r="4" fill="#7b83eb" /><circle cx="21" cy="5" r="2.700" fill="#5059c9" /><path d="M15 9h9v7c0 4-5 6-8 3z" fill="#5059c9" /><path d="M6 9h13v8c0 8-13 8-13 0z" fill="#7b83eb" /><path d="M0 6h12v12H0z" fill="#464eb8" /><text x="6" y="16" textAnchor="middle" fontFamily={label} fontWeight="700" fontSize="11" fill="#fff">T</text></Ico>
      </Slot>
      <Slot>
        <Ico><rect x="1" y="1" width="22" height="22" rx="6" fill="#4a8cff" /><rect x="4.500" y="8" width="10.500" height="8.500" rx="2" fill="#fff" /><path d="M16 11l4-3v8.500l-4-3z" fill="#fff" /></Ico>
      </Slot>
      <Slot>
        <Ico><path d="M17 0l7 3v18l-7 3z" fill="#b07df0" /><path d="M17 0v6L3 18l-3-2V15z" fill="#7b3fc4" /><path d="M17 24v-6L3 6 0 8v1.500z" fill="#9a5be0" /><path d="M0 8l2 1v6l-2 1z" fill="#5f2f9e" /></Ico>
      </Slot>
      <Slot run>
        <Ico><path d="M11 3C4 4 0 10 1 16c1 5 6 7 10 5 2-1 0-3 2-4.500 2-1 6 1 8-3C23 7 18 2 11 3z" fill="#c6e0ee" /><circle cx="5" cy="13" r="2" fill="#e23b2e" /><circle cx="8" cy="8" r="2" fill="#e8982c" /><circle cx="14" cy="7" r="2" fill="#3a9d3a" /><circle cx="9" cy="15.500" r="2" fill="#1d1d1d" /><path d="M14 23L20 4" stroke="#d5813a" strokeWidth="2.200" /><path d="M18 3l2-3 4 1-2 5z" fill="#c9a06a" /></Ico>
      </Slot>
      <Slot run>
        <Ico><circle cx="6.500" cy="12.500" r="5.500" fill="#1020b0" stroke="#3aa53a" strokeWidth="1.500" /><circle cx="17.500" cy="12.500" r="5.500" fill="#3aa53a" stroke="#1020b0" strokeWidth="1.500" /><path d="M4 8l5-3 3 3-4 3zM14 16l4 3 3-4z" fill="#f0c000" /><path d="M5 16.500L14 7c3-3 8-1 5 2.500L10 18c-4 3-8 1-5-1.500z" fill="#f01010" /></Ico>
      </Slot>
      </div>

      <div className="ml-[351px] mt-[10px] flex h-[20px] w-[49px] shrink-0 items-center justify-center border-2 border-white bg-[#189c48] font-['Open_Sans',sans-serif] text-[14px] leading-none">96%</div>
      <div className="mt-[15px] h-[10px] w-[2px] shrink-0 bg-white" />
      <Ico vb="0 0 10 16" c="ml-[6px] mt-[12px] h-[16px] w-[10px] shrink-0"><path d="M2 0h1.500v4h3V0H8v4h2v3c0 3-2 4-4 4v5H4v-5C2 11 0 10 0 7V4h2z" fill="#fff" /></Ico>
      <Ico vb="0 0 15 16" c="ml-[23px] mt-[12px] h-[16px] w-[15px] shrink-0"><g fill="none" stroke="#fff" strokeWidth="1.200"><circle cx="4.500" cy="8" r="2.300" /><path d="M.6 15.500c0-6.500 7.800-6.500 7.800 0" /><circle cx="10.500" cy="3" r="2.400" /><path d="M7.500 9c.5-4.300 6.500-4.300 6.900 1" /></g></Ico>
      <Ico vb="0 0 12 8" c="ml-[22px] mt-[16px] h-[8px] w-[12px] shrink-0"><path d="M.7 7L6 1.500 11.300 7" fill="none" stroke="#fff" strokeWidth="1.300" /></Ico>
      <Ico vb="0 0 16 11" c="ml-[10px] mt-[15px] h-[11px] w-[16px] shrink-0"><path d="M3.500 11A3.500 3.500 0 0 1 3 4.200C5-.5 10-1 12 3.300c3 .2 4 2.200 4 4 0 2-1.300 3.700-3 3.700z" fill="#1b8fe6" /><path d="M3 4.200C5-.5 10-1 12 3.300L6 7z" fill="#0a60b8" /></Ico>
      <Ico vb="0 0 17 13" c="ml-[7px] mt-[13px] h-[13px] w-[17px] shrink-0"><path d="M5 4.500h10.500v7H4.500V8" fill="none" stroke="#fff" /><path d="M7 6h7v4H7zM16 6.500h1v3h-1zM0 2h5v3c0 1.500-1 2-2 2v3H2V7C1 7 0 6.500 0 5zM1 0h1v2H1zM3 0h1v2H3z" fill="#fff" /></Ico>
      <Ico vb="0 0 17 14" c="ml-[7px] mt-[13px] h-[14px] w-[17px] shrink-0"><path d="M5 1.500h11v9H4V6M10 10.500v3M6 13.500h8M.5.5h4v4h-4z" fill="none" stroke="#fff" strokeWidth="1.100" /></Ico>
      <Ico vb="0 0 17 16" c="ml-[11px] mt-[12px] h-[16px] w-[17px] shrink-0"><path d="M12 .8c-1.500-.6-7 9-7 12 .6 1.700 8-7.500 8.500-10C13.800 1.700 13 .8 12 .8zM7 9C3 8 .7 10.500 1 12.500s3 3 5 1M9 12c3 1.500 4-1 3-3 1.500-1.500 4-1.500 4.500 0" fill="none" stroke="#fff" strokeWidth="1.200" /></Ico>
      <Ico vb="0 0 15 15" c="ml-[11px] mt-[13px] h-[15px] w-[15px] shrink-0"><circle cx="7.500" cy="7.500" r="7.300" fill="#8a8a8a" /><path d="M4.500 4.500l6 6M10.500 4.500l-6 6" stroke="#1d1d1d" strokeWidth="1.700" /></Ico>
      <div className="ml-[7px] flex w-[64px] shrink-0 flex-col items-center pt-[2px] font-['Open_Sans',sans-serif] text-[12px] leading-[18px] tracking-[-0.4px]">
        <div>12:25</div>
        <div>2021/02/03</div>
      </div>
      <div className="relative ml-[14px] mt-[12px] h-[24px] w-[24px] shrink-0">
        <Ico vb="0 0 16 16" c="h-[16px] w-[16px]"><path d="M0 0h16v13H8l-3 3v-3H0z" fill="#fff" /><path d="M3 4h10M3 6.500h10M3 9h7" stroke="#1d1d1d" /></Ico>
        <div className="absolute left-[8px] top-[7px] flex h-[16px] w-[16px] items-center justify-center rounded-full border border-[#999] bg-[#33373b] font-['Open_Sans',sans-serif] text-[11px] font-bold leading-none">6</div>
      </div>
      <div className="ml-auto mr-[4px] h-full w-px bg-[#666]" />
    </div>
  );
}

export default function App() {
  return (
    <div lang="ja" className="flex h-[1080px] w-[1920px] flex-col overflow-hidden bg-white font-['Noto_Sans_CJK_JP',sans-serif]">
      <AddressBar />
      <TabRow />
      <MenuBar />
      <CommandBar />
      <Content />
      <StatusBar />
      <Taskbar />
    </div>
  );
}
